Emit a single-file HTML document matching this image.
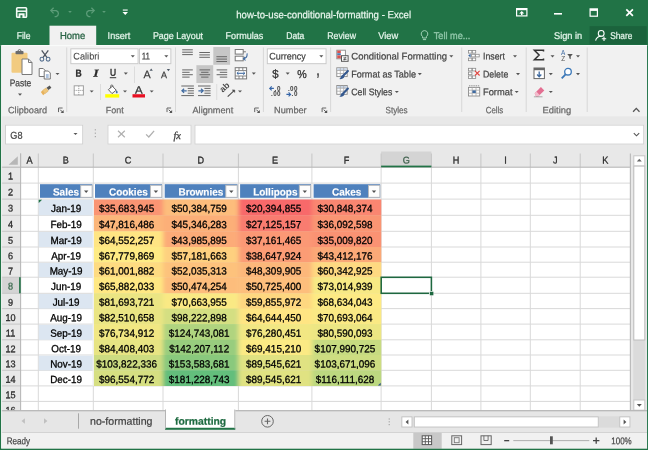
<!DOCTYPE html>
<html lang="en"><head><meta charset="utf-8"><title>how-to-use-conditional-formatting - Excel</title>
<style>
html,body{margin:0;padding:0;background:#217346;}
body{width:648px;height:450px;overflow:hidden;font-family:"Liberation Sans",sans-serif;}
#app{will-change:transform;position:relative;width:648px;height:450px;overflow:hidden;background:#f1f1f1;}
#app div,#app span.t,#app svg{position:absolute;box-sizing:border-box;}
#app span.t{white-space:nowrap;transform-origin:0 0;display:block;}
#app svg{overflow:visible;}
</style></head>
<body><div id="app">
<div style="left:0px;top:0px;width:648px;height:45px;background:#217346;transform-origin:0 0;transform:matrix(1.0000,0,0,1.0044,0.000,0.000);"></div>
<svg style="left:15px;top:6px" width="14" height="14"><g transform="translate(0.90 0.90)"><rect x="0.8" y="0.8" width="9.8" height="9.6" rx="0.8" fill="none" stroke="#f4faf6" stroke-width="1.6"/><path d="M1 4.3H10.4" stroke="#f4faf6" stroke-width="1.5"/><rect x="2.7" y="6.4" width="6" height="4" fill="#f4faf6"/><rect x="4.5" y="8.3" width="2" height="2.6" fill="#217346"/></g></svg>
<svg style="left:50px;top:7px" width="13" height="12"><g transform="translate(0.00 0.00)"><path d="M1 3.6H6.2A3.4 3.2 0 0 1 6.2 9.6H4.6" fill="none" stroke="#5c9d79" stroke-width="1.3"/><path d="M3.6 0.8L0.8 3.6L3.6 6.4" fill="none" stroke="#5c9d79" stroke-width="1.3"/></g></svg>
<svg style="left:68px;top:11px" width="6" height="4"><g transform="translate(0.20 0.00)"><path d="M0 0H3.6 L1.8 2 Z" fill="#5c9d79"/></g></svg>
<svg style="left:84px;top:7px" width="13" height="12"><g transform="translate(0.00 0.00)"><path d="M10 3.6H4.8A3.4 3.2 0 0 0 4.8 9.6H6.4" fill="none" stroke="#5c9d79" stroke-width="1.3"/><path d="M7.4 0.8L10.2 3.6L7.4 6.4" fill="none" stroke="#5c9d79" stroke-width="1.3"/></g></svg>
<svg style="left:102px;top:11px" width="6" height="4"><g transform="translate(0.20 0.00)"><path d="M0 0H3.6 L1.8 2 Z" fill="#5c9d79"/></g></svg>
<svg style="left:122px;top:9px" width="8" height="8"><g transform="translate(0.50 0.50)"><rect x="0.3" y="0" width="4.9" height="1.1" fill="#fff"/><path d="M0 2.6H5.5L2.75 5.6Z" fill="#fff"/></g></svg>
<span class="t" style="left:236px;top:8px;font-size:10.30px;line-height:14px;color:#e8f6ed;-webkit-text-stroke:0.22px #e8f6ed;transform:matrix(0.9343,0.0005,0,1.0000,0.200,0.200);">how-to-use-conditional-formatting - Excel</span>
<svg style="left:516px;top:8px" width="14" height="11"><g transform="translate(0.00 0.00)"><rect x="0.6" y="0.6" width="10.3" height="7.3" fill="none" stroke="#fff" stroke-width="1.2"/><rect x="0.6" y="0.6" width="10.3" height="1.6" fill="#fff"/><path d="M5.75 3L8.3 5.4H6.5V7H5V5.4H3.2Z" fill="#fff"/></g></svg>
<div style="left:554px;top:13px;width:8px;height:2px;background:#fff;transform-origin:0 0;transform:matrix(1.0000,0,0,0.8000,0.000,0.000);"></div>
<svg style="left:589px;top:8px" width="11" height="11"><g transform="translate(0.50 0.30)"><rect x="0.6" y="0.6" width="7.3" height="7.3" fill="none" stroke="#fff" stroke-width="1.2"/><rect x="0.6" y="0.6" width="7.3" height="2" fill="#fff"/></g></svg>
<svg style="left:625px;top:8px" width="10" height="10"><g transform="translate(0.80 0.80)"><path d="M0.5 0.5L7.1 7.1M7.1 0.5L0.5 7.1" stroke="#fff" stroke-width="1.7" fill="none"/></g></svg>
<div style="left:49px;top:25px;width:47px;height:20px;background:#f1f1f1;transform-origin:0 0;transform:matrix(0.9936,0,0,1.0000,0.500,0.700);"></div>
<span class="t" style="left:16px;top:29px;font-size:9.80px;line-height:13px;color:#e6f6ec;-webkit-text-stroke:0.22px #e6f6ec;transform:matrix(0.8739,0.0005,0,1.0000,0.700,0.100);">File</span>
<span class="t" style="left:60px;top:29px;font-size:9.80px;line-height:13px;color:#2a6546;-webkit-text-stroke:0.3px #2a6546;transform:matrix(0.9678,0.0005,0,1.0000,0.000,0.100);">Home</span>
<span class="t" style="left:107px;top:29px;font-size:9.80px;line-height:13px;color:#e6f6ec;-webkit-text-stroke:0.22px #e6f6ec;transform:matrix(0.9302,0.0005,0,1.0000,0.600,0.100);">Insert</span>
<span class="t" style="left:152px;top:29px;font-size:9.80px;line-height:13px;color:#e6f6ec;-webkit-text-stroke:0.22px #e6f6ec;transform:matrix(0.9121,0.0005,0,1.0000,0.900,0.100);">Page Layout</span>
<span class="t" style="left:225px;top:29px;font-size:9.80px;line-height:13px;color:#e6f6ec;-webkit-text-stroke:0.22px #e6f6ec;transform:matrix(0.9230,0.0005,0,1.0000,0.600,0.100);">Formulas</span>
<span class="t" style="left:286px;top:29px;font-size:9.80px;line-height:13px;color:#e6f6ec;-webkit-text-stroke:0.22px #e6f6ec;transform:matrix(0.8792,0.0005,0,1.0000,0.200,0.100);">Data</span>
<span class="t" style="left:327px;top:29px;font-size:9.80px;line-height:13px;color:#e6f6ec;-webkit-text-stroke:0.22px #e6f6ec;transform:matrix(0.8932,0.0005,0,1.0000,0.300,0.100);">Review</span>
<span class="t" style="left:378px;top:29px;font-size:9.80px;line-height:13px;color:#e6f6ec;-webkit-text-stroke:0.22px #e6f6ec;transform:matrix(0.9494,0.0005,0,1.0000,0.200,0.100);">View</span>
<svg style="left:420px;top:30px" width="10" height="13"><g transform="translate(0.50 0.00)"><path d="M4 0.6A3.3 3.3 0 0 1 5.9 6.6V8H2.1V6.6A3.3 3.3 0 0 1 4 0.6Z" fill="none" stroke="#9fd0b5" stroke-width="1"/><path d="M2.4 9.6H5.6" stroke="#9fd0b5" stroke-width="1"/></g></svg>
<span class="t" style="left:433px;top:29px;font-size:9.80px;line-height:13px;color:#8fc6a8;-webkit-text-stroke:0.35px #8fc6a8;transform:matrix(0.9334,0.0005,0,1.0000,0.800,0.100);">Tell me...</span>
<span class="t" style="left:554px;top:29px;font-size:9.80px;line-height:13px;color:#e6f6ec;-webkit-text-stroke:0.22px #e6f6ec;transform:matrix(0.9411,0.0005,0,1.0000,0.000,0.100);">Sign in</span>
<div style="left:589px;top:26px;width:57px;height:18px;background:#1b633c;transform-origin:0 0;transform:matrix(1.0000,0,0,1.0111,0.600,0.200);"></div>
<svg style="left:595px;top:30px" width="14" height="13"><g transform="translate(0.00 0.00)"><circle cx="6.2" cy="3.4" r="2.9" fill="none" stroke="#fff" stroke-width="1.1"/><path d="M0.6 10.6A5.2 5.2 0 0 1 6.6 6.3" fill="none" stroke="#fff" stroke-width="1.1"/><path d="M9 6.6V11M6.8 8.8H11.2" stroke="#fff" stroke-width="1.1"/></g></svg>
<span class="t" style="left:610px;top:29px;font-size:9.80px;line-height:13px;color:#e6f6ec;-webkit-text-stroke:0.22px #e6f6ec;transform:matrix(0.8489,0.0005,0,1.0000,0.200,0.100);">Share</span>
<div style="left:0px;top:45px;width:648px;height:71px;background:#f1f1f1;transform-origin:0 0;transform:matrix(1.0000,0,0,0.9972,0.000,0.200);"></div>
<div style="left:1px;top:45px;width:646px;height:1px;background:#f9fbfa;transform-origin:0 0;transform:matrix(1.0000,0,0,1.2000,0.000,0.000);"></div>
<div style="left:66px;top:47px;width:1px;height:64px;background:#d8d8d8;transform-origin:0 0;transform:matrix(1.0000,0,0,1.0078,0.200,0.500);"></div>
<div style="left:175px;top:47px;width:1px;height:64px;background:#d8d8d8;transform-origin:0 0;transform:matrix(1.0000,0,0,1.0078,0.000,0.500);"></div>
<div style="left:262px;top:47px;width:1px;height:64px;background:#d8d8d8;transform-origin:0 0;transform:matrix(1.0000,0,0,1.0078,0.900,0.500);"></div>
<div style="left:330px;top:47px;width:1px;height:64px;background:#d8d8d8;transform-origin:0 0;transform:matrix(1.0000,0,0,1.0078,0.100,0.500);"></div>
<div style="left:461px;top:47px;width:1px;height:64px;background:#d8d8d8;transform-origin:0 0;transform:matrix(1.0000,0,0,1.0078,0.200,0.500);"></div>
<div style="left:525px;top:47px;width:1px;height:64px;background:#d8d8d8;transform-origin:0 0;transform:matrix(1.0000,0,0,1.0078,0.700,0.500);"></div>
<div style="left:586px;top:47px;width:1px;height:64px;background:#d8d8d8;transform-origin:0 0;transform:matrix(1.0000,0,0,1.0078,0.700,0.500);"></div>
<svg style="left:10px;top:49px" width="25" height="28"><g transform="translate(0.50 0.50)"><rect x="1" y="3.2" width="16" height="20" rx="1" fill="#f2cb80" />
<rect x="5" y="1.4" width="8" height="3.4" rx="0.8" fill="#6b6b6b"/>
<circle cx="9" cy="1.6" r="1.5" fill="none" stroke="#6b6b6b" stroke-width="1"/>
<path d="M11.5 9.5H18L21.5 13V25H11.5Z" fill="#fff" stroke="#7a7a7a" stroke-width="1"/>
<path d="M18 9.5V13H21.5" fill="none" stroke="#7a7a7a" stroke-width="1"/></g></svg>
<span class="t" style="left:9px;top:76px;font-size:9.70px;line-height:13px;color:#444;-webkit-text-stroke:0.22px #444;transform:matrix(0.8668,0.0005,0,1.0000,0.700,0.300);">Paste</span>
<svg style="left:18px;top:93px" width="6" height="5"><g transform="translate(0.00 0.60)"><path d="M0 0H4 L2 2.2 Z" fill="#555"/></g></svg>
<svg style="left:39px;top:50px" width="13" height="14"><g transform="translate(0.50 0.00)"><path d="M2.2 0.4L7.6 7.6M8.8 0.4L3.4 7.6" stroke="#4e5560" stroke-width="1.3" fill="none"/>
<circle cx="2.4" cy="9.2" r="1.9" fill="none" stroke="#56708f" stroke-width="1.1"/>
<circle cx="8.6" cy="9.2" r="1.9" fill="none" stroke="#56708f" stroke-width="1.1"/></g></svg>
<svg style="left:38px;top:68px" width="15" height="14"><g transform="translate(0.70 0.00)"><path d="M0.5 0.5H4.5L6.5 2.5V8.5H0.5Z" fill="#fff" stroke="#777" stroke-width="1"/>
<path d="M5.5 3H9.6L11.6 5V11H5.5Z" fill="#fff" stroke="#777" stroke-width="1"/>
<path d="M7.2 7H10M7.2 9H10" stroke="#4a79b5" stroke-width="0.9"/></g></svg>
<svg style="left:55px;top:72px" width="6" height="5"><g transform="translate(0.50 0.90)"><path d="M0 0H4 L2 2.2 Z" fill="#555"/></g></svg>
<svg style="left:40px;top:85px" width="14" height="13"><g transform="translate(0.00 0.00)"><path d="M6.5 2.8L9.6 0.6L11.4 2.8L8.4 5Z" fill="#555"/>
<path d="M2.6 5.4L6 3L8.4 6L5 8.6Z" fill="#f0c679" stroke="#d9a650" stroke-width="0.5"/>
<path d="M0.8 7L2.6 5.6L5 8.6L3.2 10.2Z" fill="#e8b25b"/></g></svg>
<span class="t" style="left:8px;top:104px;font-size:9.20px;line-height:12px;color:#666;-webkit-text-stroke:0.22px #666;transform:matrix(0.9954,0.0005,0,1.0000,0.000,0.200);">Clipboard</span>
<svg style="left:58px;top:107px" width="8" height="8"><g transform="translate(0.00 0.50)"><path d="M0.5 4.6V0.5H4.6" fill="none" stroke="#666" stroke-width="1"/><path d="M2.2 2.2L5 5" fill="none" stroke="#555" stroke-width="1"/><path d="M5.6 2.6V5.6H2.6Z" fill="#555"/></g></svg>
<div style="left:70px;top:48px;width:68px;height:16px;background:#fff;border:1px solid #c8c8c8;transform-origin:0 0;transform:matrix(1.0044,0,0,0.9938,0.300,0.300);"></div>
<span class="t" style="left:73px;top:49px;font-size:9.70px;line-height:13px;color:#444;-webkit-text-stroke:0.08px #444;transform:matrix(0.9494,0.0005,0,1.0000,0.300,0.400);">Calibri</span>
<svg style="left:130px;top:55px" width="6" height="5"><g transform="translate(0.80 0.30)"><path d="M0 0H4 L2 2.2 Z" fill="#555"/></g></svg>
<div style="left:138px;top:48px;width:32px;height:16px;background:#fff;border:1px solid #c8c8c8;transform-origin:0 0;transform:matrix(1.0156,0,0,0.9938,0.900,0.300);"></div>
<span class="t" style="left:141px;top:49px;font-size:9.70px;line-height:13px;color:#444;-webkit-text-stroke:0.22px #444;transform:matrix(0.8242,0.0005,0,1.0000,0.700,0.400);">11</span>
<svg style="left:164px;top:55px" width="6" height="5"><g transform="translate(0.30 0.30)"><path d="M0 0H4 L2 2.2 Z" fill="#555"/></g></svg>
<span class="t" style="left:75px;top:66px;font-size:10.00px;line-height:13px;color:#2a2a2a;font-weight:700;-webkit-text-stroke:0.3px #2a2a2a;transform:matrix(0.8585,0.0005,0,1.0000,0.400,0.400);">B</span>
<span class="t" style="left:93px;top:66px;font-size:10.40px;line-height:14px;color:#2a2a2a;font-weight:700;font-style:italic;font-family:'Liberation Serif',serif;-webkit-text-stroke:0.3px #2a2a2a;transform:matrix(1.2355,0.0005,0,1.0000,0.600,0.400);">I</span>
<span class="t" style="left:109px;top:65px;font-size:9.80px;line-height:13px;color:#2a2a2a;-webkit-text-stroke:0.4px #2a2a2a;transform:matrix(0.8619,0.0005,0,1.0000,0.900,0.800);">U</span>
<div style="left:109px;top:77px;width:6px;height:1px;background:#333;transform-origin:0 0;transform:matrix(1.0667,0,0,1.0000,0.800,0.200);"></div>
<svg style="left:123px;top:72px" width="6" height="5"><g transform="translate(0.80 0.50)"><path d="M0 0H4 L2 2.2 Z" fill="#555"/></g></svg>
<div style="left:134px;top:66px;width:1px;height:16px;background:#dcdcdc;transform-origin:0 0;transform:matrix(1.0000,0,0,1.0312,0.000,0.500);"></div>
<span class="t" style="left:143px;top:67px;font-size:11.00px;line-height:15px;color:#3a3a3a;-webkit-text-stroke:0.22px #3a3a3a;transform:matrix(0.9813,0.0005,0,1.0000,0.400,0.200);">A</span>
<svg style="left:149px;top:68px" width="6" height="5"><g transform="translate(0.60 0.60)"><path d="M0 2.2L1.6 0L3.2 2.2Z" fill="#4d5866"/></g></svg>
<span class="t" style="left:161px;top:68px;font-size:9.60px;line-height:13px;color:#3a3a3a;-webkit-text-stroke:0.22px #3a3a3a;transform:matrix(0.9370,0.0005,0,1.0000,0.000,0.200);">A</span>
<svg style="left:166px;top:69px" width="6" height="5"><g transform="translate(0.80 0.00)"><path d="M0 0H3.2L1.6 2.2Z" fill="#4d5866"/></g></svg>
<svg style="left:73px;top:85px" width="13" height="13"><g transform="translate(0.70 0.30)"><rect x="0.5" y="0.5" width="9.2" height="9.2" fill="#fff" stroke="#a0a0a0" stroke-width="1"/><path d="M5.1 0.5V9.7M0.5 5.1H9.7" stroke="#a0a0a0" stroke-width="1" stroke-dasharray="1.2 0.8"/></g></svg>
<svg style="left:89px;top:90px" width="6" height="5"><g transform="translate(0.70 0.40)"><path d="M0 0H4 L2 2.2 Z" fill="#555"/></g></svg>
<div style="left:100px;top:84px;width:1px;height:16px;background:#dcdcdc;transform-origin:0 0;transform:matrix(1.0000,0,0,1.0000,0.000,0.000);"></div>
<svg style="left:105px;top:85px" width="17" height="15"><g transform="translate(0.00 0.00)"><rect x="0.2" y="9.2" width="14" height="3.4" fill="#ffff00"/>
<path d="M3.4 4.6L7.4 1.2L11.2 5.2L7 8.6Z" fill="#fff" stroke="#555" stroke-width="0.9"/>
<path d="M5.6 3.2V1.2A1.2 1.2 0 0 1 8 1.2V2" fill="none" stroke="#555" stroke-width="0.8"/>
<path d="M11.6 5.2C13 6.6 13 8.2 11.8 8.4C10.6 8.2 10.6 6.6 11.6 5.2Z" fill="#3f6aa0"/></g></svg>
<svg style="left:123px;top:90px" width="6" height="5"><g transform="translate(0.00 0.40)"><path d="M0 0H4 L2 2.2 Z" fill="#555"/></g></svg>
<span class="t" style="left:135px;top:83px;font-size:10.40px;line-height:14px;color:#3a3a3a;-webkit-text-stroke:0.3px #3a3a3a;transform:matrix(1.0956,0.0005,0,1.0000,0.000,0.500);">A</span>
<div style="left:132px;top:94px;width:12px;height:3px;background:#e81123;transform-origin:0 0;transform:matrix(1.0417,0,0,1.1000,0.500,0.200);"></div>
<svg style="left:149px;top:90px" width="6" height="5"><g transform="translate(0.70 0.40)"><path d="M0 0H4 L2 2.2 Z" fill="#555"/></g></svg>
<span class="t" style="left:105px;top:104px;font-size:9.20px;line-height:12px;color:#666;-webkit-text-stroke:0.22px #666;transform:matrix(0.9723,0.0005,0,1.0000,0.800,0.200);">Font</span>
<svg style="left:166px;top:107px" width="8" height="8"><g transform="translate(0.50 0.50)"><path d="M0.5 4.6V0.5H4.6" fill="none" stroke="#666" stroke-width="1"/><path d="M2.2 2.2L5 5" fill="none" stroke="#555" stroke-width="1"/><path d="M5.6 2.6V5.6H2.6Z" fill="#555"/></g></svg>
<div style="left:213px;top:47px;width:17px;height:18px;background:#c6c6c6;transform-origin:0 0;transform:matrix(0.9882,0,0,0.9889,0.300,0.000);"></div>
<div style="left:196px;top:65px;width:17px;height:18px;background:#c6c6c6;transform-origin:0 0;transform:matrix(0.9882,0,0,0.9889,0.400,0.200);"></div>
<svg style="left:182px;top:49px" width="13" height="10"><g transform="translate(0.20 0.30)"><rect x="0.00" y="0.00" width="10.60" height="1" fill="#666"/><rect x="0.00" y="2.40" width="10.60" height="1" fill="#666"/><rect x="0.00" y="4.80" width="10.60" height="1" fill="#666"/></g></svg>
<svg style="left:199px;top:52px" width="13" height="10"><g transform="translate(0.30 0.00)"><rect x="0.00" y="0.00" width="10.60" height="1" fill="#666"/><rect x="0.00" y="2.40" width="10.60" height="1" fill="#666"/><rect x="0.00" y="4.80" width="10.60" height="1" fill="#666"/></g></svg>
<svg style="left:216px;top:56px" width="13" height="10"><g transform="translate(0.40 0.20)"><rect x="0.00" y="0.00" width="10.60" height="1" fill="#666"/><rect x="0.00" y="2.40" width="10.60" height="1" fill="#666"/><rect x="0.00" y="4.80" width="10.60" height="1" fill="#666"/></g></svg>
<svg style="left:234px;top:49px" width="15" height="15"><g transform="translate(0.70 0.00)"><rect x="0.5" y="0.5" width="8" height="4.6" fill="#fff" stroke="#777" stroke-width="1"/>
<rect x="0.5" y="7.2" width="8" height="4.6" fill="#fff" stroke="#777" stroke-width="1"/>
<path d="M8.5 2.8H11.2" stroke="#777" stroke-width="1"/>
<path d="M12.4 4.4C12.6 7.4 11.4 9.4 9 9.8" fill="none" stroke="#3f6aa0" stroke-width="1.1"/>
<path d="M10.6 8L8.8 9.9L10.9 11.4" fill="none" stroke="#3f6aa0" stroke-width="1.1"/></g></svg>
<svg style="left:182px;top:69px" width="13" height="12"><g transform="translate(0.20 0.40)"><rect x="0.00" y="0.00" width="10.60" height="1" fill="#666"/><rect x="0.00" y="2.40" width="7.40" height="1" fill="#666"/><rect x="0.00" y="4.80" width="10.60" height="1" fill="#666"/><rect x="0.00" y="7.20" width="7.40" height="1" fill="#666"/></g></svg>
<svg style="left:199px;top:69px" width="13" height="12"><g transform="translate(0.50 0.40)"><rect x="0.00" y="0.00" width="10.60" height="1" fill="#666"/><rect x="1.60" y="2.40" width="7.40" height="1" fill="#666"/><rect x="0.00" y="4.80" width="10.60" height="1" fill="#666"/><rect x="1.60" y="7.20" width="7.40" height="1" fill="#666"/></g></svg>
<svg style="left:216px;top:69px" width="13" height="12"><g transform="translate(0.60 0.40)"><rect x="0.00" y="0.00" width="10.60" height="1" fill="#666"/><rect x="3.20" y="2.40" width="7.40" height="1" fill="#666"/><rect x="0.00" y="4.80" width="10.60" height="1" fill="#666"/><rect x="3.20" y="7.20" width="7.40" height="1" fill="#666"/></g></svg>
<svg style="left:234px;top:67px" width="15" height="15"><g transform="translate(0.70 0.20)"><rect x="0.5" y="0.5" width="11.4" height="11.2" fill="#fff" stroke="#777" stroke-width="1"/>
<path d="M0.5 3.4H11.9M0.5 8.8H11.9M4.3 0.5V3.4M8.1 0.5V3.4M4.3 8.8V11.7M8.1 8.8V11.7" stroke="#777" stroke-width="0.9"/>
<path d="M2.4 6.1H10" stroke="#3f6aa0" stroke-width="1.1"/>
<path d="M3.8 4.7L2.2 6.1L3.8 7.5M8.6 4.7L10.2 6.1L8.6 7.5" fill="none" stroke="#3f6aa0" stroke-width="1"/></g></svg>
<svg style="left:251px;top:72px" width="6" height="5"><g transform="translate(0.80 0.50)"><path d="M0 0H4 L2 2.2 Z" fill="#555"/></g></svg>
<svg style="left:181px;top:85px" width="15" height="13"><g transform="translate(0.30 0.50)"><rect x="0" y="0" width="12.6" height="1" fill="#666"/><rect x="6.4" y="2.4" width="6.2" height="1" fill="#666"/><rect x="6.4" y="4.8" width="6.2" height="1" fill="#666"/><rect x="6.4" y="7.2" width="6.2" height="1" fill="#666"/><rect x="0" y="9.6" width="12.6" height="1" fill="#666"/>
<path d="M0.6 5.3H5.4M2.8 3.2L0.6 5.3L2.8 7.4" fill="none" stroke="#3f6aa0" stroke-width="1.2"/></g></svg>
<svg style="left:198px;top:85px" width="15" height="13"><g transform="translate(0.00 0.50)"><rect x="0" y="0" width="12.6" height="1" fill="#666"/><rect x="6.4" y="2.4" width="6.2" height="1" fill="#666"/><rect x="6.4" y="4.8" width="6.2" height="1" fill="#666"/><rect x="6.4" y="7.2" width="6.2" height="1" fill="#666"/><rect x="0" y="9.6" width="12.6" height="1" fill="#666"/>
<path d="M0.4 5.3H5.2M3 3.2L5.2 5.3L3 7.4" fill="none" stroke="#3f6aa0" stroke-width="1.2"/></g></svg>
<div style="left:216px;top:84px;width:1px;height:16px;background:#dcdcdc;transform-origin:0 0;transform:matrix(1.0000,0,0,1.0000,0.200,0.000);"></div>
<svg style="left:222px;top:84px" width="15" height="15"><g transform="translate(0.50 0.60)"><text x="0" y="0" font-size="8.6" font-weight="700" font-family="Liberation Sans, sans-serif" fill="#4a4a4a" transform="translate(0.2,8.2) rotate(-42)">ab</text><path d="M5.2 12L11.6 6" stroke="#4a4a4a" stroke-width="1.1"/><path d="M9.6 5.4L12.2 5.4L12.2 8" fill="#4a4a4a" stroke="#4a4a4a" stroke-width="0.6"/></g></svg>
<svg style="left:238px;top:90px" width="6" height="5"><g transform="translate(0.00 0.40)"><path d="M0 0H4 L2 2.2 Z" fill="#555"/></g></svg>
<span class="t" style="left:192px;top:104px;font-size:9.20px;line-height:12px;color:#666;-webkit-text-stroke:0.22px #666;transform:matrix(0.9973,0.0005,0,1.0000,0.500,0.200);">Alignment</span>
<svg style="left:254px;top:107px" width="8" height="8"><g transform="translate(0.20 0.50)"><path d="M0.5 4.6V0.5H4.6" fill="none" stroke="#666" stroke-width="1"/><path d="M2.2 2.2L5 5" fill="none" stroke="#555" stroke-width="1"/><path d="M5.6 2.6V5.6H2.6Z" fill="#555"/></g></svg>
<div style="left:266px;top:48px;width:60px;height:16px;background:#fff;border:1px solid #c8c8c8;transform-origin:0 0;transform:matrix(0.9967,0,0,0.9938,0.800,0.300);"></div>
<span class="t" style="left:269px;top:49px;font-size:9.70px;line-height:13px;color:#444;-webkit-text-stroke:0.22px #444;transform:matrix(0.9250,0.0005,0,1.0000,0.300,0.400);">Currency</span>
<svg style="left:319px;top:55px" width="6" height="5"><g transform="translate(0.30 0.30)"><path d="M0 0H4 L2 2.2 Z" fill="#555"/></g></svg>
<span class="t" style="left:272px;top:66px;font-size:12.00px;line-height:16px;color:#333;-webkit-text-stroke:0.3px #333;transform:matrix(0.9440,0.0005,0,1.0000,0.200,0.000);">$</span>
<svg style="left:285px;top:72px" width="6" height="5"><g transform="translate(0.70 0.50)"><path d="M0 0H4 L2 2.2 Z" fill="#555"/></g></svg>
<span class="t" style="left:297px;top:67px;font-size:11.50px;line-height:15px;color:#333;-webkit-text-stroke:0.3px #333;transform:matrix(0.9291,0.0005,0,1.0000,0.300,0.000);">%</span>
<span class="t" style="left:316px;top:61px;font-size:14.00px;line-height:19px;color:#444;font-weight:700;-webkit-text-stroke:0.22px #444;transform:matrix(0.7713,0.0005,0,1.0000,0.600,0.500);">,</span>
<svg style="left:269px;top:85px" width="14" height="13"><g transform="translate(0.30 0.80)"><text x="5.2" y="4.8" font-size="6.3" font-weight="700" font-family="Liberation Sans, sans-serif" fill="#3c3c3c" textLength="6">.0</text><text x="1.8" y="10.6" font-size="6.3" font-weight="700" font-family="Liberation Sans, sans-serif" fill="#3c3c3c" textLength="9.4">.00</text><path d="M0.6 2.6H4.6M2.4 0.6L0.4 2.6L2.4 4.6" fill="none" stroke="#3565a8" stroke-width="1.1"/></g></svg>
<svg style="left:286px;top:85px" width="14" height="13"><g transform="translate(0.00 0.80)"><text x="2" y="4.8" font-size="6.3" font-weight="700" font-family="Liberation Sans, sans-serif" fill="#3c3c3c" textLength="9.4">.00</text><text x="5.6" y="10.6" font-size="6.3" font-weight="700" font-family="Liberation Sans, sans-serif" fill="#3c3c3c" textLength="6">.0</text><path d="M0.4 8.6H4.6M2.6 6.6L4.6 8.6L2.6 10.6" fill="none" stroke="#3565a8" stroke-width="1.1"/></g></svg>
<span class="t" style="left:274px;top:104px;font-size:9.20px;line-height:12px;color:#666;-webkit-text-stroke:0.22px #666;transform:matrix(0.9993,0.0005,0,1.0000,0.000,0.200);">Number</span>
<svg style="left:321px;top:107px" width="8" height="8"><g transform="translate(0.60 0.50)"><path d="M0.5 4.6V0.5H4.6" fill="none" stroke="#666" stroke-width="1"/><path d="M2.2 2.2L5 5" fill="none" stroke="#555" stroke-width="1"/><path d="M5.6 2.6V5.6H2.6Z" fill="#555"/></g></svg>
<svg style="left:336px;top:49px" width="15" height="15"><g transform="translate(0.30 0.70)"><rect x="0.5" y="0.5" width="8.6" height="8.6" fill="#fff" stroke="#8a8a8a" stroke-width="0.9"/>
<rect x="0.9" y="0.9" width="3.6" height="2.4" fill="#d9534f"/><rect x="0.9" y="5.6" width="3.6" height="3" fill="#d9534f"/><rect x="0.9" y="3.5" width="3.6" height="1.9" fill="#4a79b5"/>
<rect x="5.2" y="6" width="6.6" height="5.6" fill="#fff" stroke="#555" stroke-width="1"/>
<path d="M7 8.2H10.2M7 9.8H10.2M9.2 7.2L7.8 10.8" stroke="#555" stroke-width="0.8"/></g></svg>
<svg style="left:336px;top:67px" width="15" height="15"><g transform="translate(0.30 0.30)"><rect x="0.5" y="0.5" width="10.4" height="8.8" fill="#fff" stroke="#8a8a8a" stroke-width="0.9"/>
<rect x="1" y="1" width="9.4" height="2.2" fill="#c9d6e8"/>
<path d="M0.5 3.2H10.9M0.5 6.2H10.9M4 0.5V9.3M7.4 0.5V9.3" stroke="#a9a9a9" stroke-width="0.8"/>
<path d="M11.6 3.6L6.6 8.8" stroke="#35598f" stroke-width="2.1" stroke-linecap="round"/>
<path d="M6.9 7.6L8.2 9.2C7.6 11.2 5.2 12 3 11.8C4.4 10.8 4.6 9.4 5.2 8.2Z" fill="#35598f"/></g></svg>
<svg style="left:336px;top:85px" width="15" height="15"><g transform="translate(0.30 0.00)"><rect x="0.5" y="0.5" width="10.4" height="8.8" fill="#fff" stroke="#8a8a8a" stroke-width="0.9"/>
<rect x="1" y="1" width="9.4" height="2.2" fill="#c9d6e8"/>
<path d="M0.5 3.2H10.9M0.5 6.2H10.9M4 0.5V9.3M7.4 0.5V9.3" stroke="#a9a9a9" stroke-width="0.8"/>
<path d="M11.6 3.6L6.6 8.8" stroke="#35598f" stroke-width="2.1" stroke-linecap="round"/>
<path d="M6.9 7.6L8.2 9.2C7.6 11.2 5.2 12 3 11.8C4.4 10.8 4.6 9.4 5.2 8.2Z" fill="#35598f"/></g></svg>
<span class="t" style="left:351px;top:49px;font-size:9.70px;line-height:13px;color:#444;-webkit-text-stroke:0.22px #444;transform:matrix(0.9827,0.0005,0,1.0000,0.300,0.400);">Conditional Formatting</span>
<svg style="left:449px;top:55px" width="6" height="5"><g transform="translate(0.30 0.30)"><path d="M0 0H4 L2 2.2 Z" fill="#555"/></g></svg>
<span class="t" style="left:351px;top:67px;font-size:9.70px;line-height:13px;color:#444;-webkit-text-stroke:0.22px #444;transform:matrix(0.9327,0.0005,0,1.0000,0.300,0.500);">Format as Table</span>
<svg style="left:417px;top:73px" width="6" height="5"><g transform="translate(0.80 0.10)"><path d="M0 0H4 L2 2.2 Z" fill="#555"/></g></svg>
<span class="t" style="left:351px;top:85px;font-size:9.70px;line-height:13px;color:#444;-webkit-text-stroke:0.22px #444;transform:matrix(0.8948,0.0005,0,1.0000,0.300,0.300);">Cell Styles</span>
<svg style="left:394px;top:90px" width="6" height="5"><g transform="translate(0.80 0.90)"><path d="M0 0H4 L2 2.2 Z" fill="#555"/></g></svg>
<span class="t" style="left:385px;top:104px;font-size:9.20px;line-height:12px;color:#666;-webkit-text-stroke:0.22px #666;transform:matrix(0.8861,0.0005,0,1.0000,0.500,0.200);">Styles</span>
<svg style="left:468px;top:49px" width="15" height="15"><g transform="translate(0.00 0.50)"><rect x="0.5" y="1" width="3.4" height="2.6" fill="#fff" stroke="#8a8a8a" stroke-width="0.8"/><rect x="4.3" y="1" width="3.4" height="2.6" fill="#fff" stroke="#8a8a8a" stroke-width="0.8"/>
<rect x="3.6" y="4.8" width="3.6" height="2.6" fill="#fff" stroke="#8a8a8a" stroke-width="0.8"/><rect x="7.6" y="4.8" width="3.6" height="2.6" fill="#fff" stroke="#8a8a8a" stroke-width="0.8"/>
<rect x="0.5" y="8.6" width="3.4" height="2.6" fill="#fff" stroke="#8a8a8a" stroke-width="0.8"/><rect x="4.3" y="8.6" width="3.4" height="2.6" fill="#fff" stroke="#8a8a8a" stroke-width="0.8"/>
<path d="M0.2 6.1L2.6 4.2V8Z" fill="#3f6aa0"/></g></svg>
<svg style="left:468px;top:67px" width="15" height="15"><g transform="translate(0.00 0.30)"><rect x="0.5" y="1" width="3.4" height="2.6" fill="#fff" stroke="#8a8a8a" stroke-width="0.8"/><rect x="4.3" y="1" width="3.4" height="2.6" fill="#fff" stroke="#8a8a8a" stroke-width="0.8"/>
<rect x="0.5" y="4.8" width="3.4" height="2.6" fill="#fff" stroke="#8a8a8a" stroke-width="0.8"/>
<rect x="0.5" y="8.6" width="3.4" height="2.6" fill="#fff" stroke="#8a8a8a" stroke-width="0.8"/><rect x="4.3" y="8.6" width="3.4" height="2.6" fill="#fff" stroke="#8a8a8a" stroke-width="0.8"/>
<path d="M7 3.6L11.6 8.2M11.6 3.6L7 8.2" stroke="#e0443e" stroke-width="1.1"/></g></svg>
<svg style="left:468px;top:85px" width="15" height="15"><g transform="translate(0.00 0.00)"><rect x="0.5" y="2.4" width="11.2" height="8.6" fill="#fff" stroke="#8a8a8a" stroke-width="0.9"/>
<path d="M0.5 5.2H11.7M0.5 8.2H11.7M4.2 2.4V11M8 2.4V11" stroke="#a9a9a9" stroke-width="0.8"/>
<rect x="4.4" y="5.4" width="3.4" height="2.6" fill="#3f6aa0"/>
<path d="M1 0.8H11.4" stroke="#777" stroke-width="0.8" stroke-dasharray="1.4 0.8"/></g></svg>
<span class="t" style="left:483px;top:49px;font-size:9.70px;line-height:13px;color:#444;-webkit-text-stroke:0.22px #444;transform:matrix(0.9068,0.0005,0,1.0000,0.000,0.400);">Insert</span>
<svg style="left:513px;top:55px" width="6" height="5"><g transform="translate(0.00 0.30)"><path d="M0 0H4 L2 2.2 Z" fill="#555"/></g></svg>
<span class="t" style="left:483px;top:67px;font-size:9.70px;line-height:13px;color:#444;-webkit-text-stroke:0.22px #444;transform:matrix(0.9023,0.0005,0,1.0000,0.000,0.500);">Delete</span>
<svg style="left:516px;top:73px" width="6" height="5"><g transform="translate(0.00 0.10)"><path d="M0 0H4 L2 2.2 Z" fill="#555"/></g></svg>
<span class="t" style="left:483px;top:85px;font-size:9.70px;line-height:13px;color:#444;-webkit-text-stroke:0.22px #444;transform:matrix(0.9603,0.0005,0,1.0000,0.000,0.300);">Format</span>
<svg style="left:514px;top:90px" width="6" height="5"><g transform="translate(0.70 0.90)"><path d="M0 0H4 L2 2.2 Z" fill="#555"/></g></svg>
<span class="t" style="left:485px;top:104px;font-size:9.20px;line-height:12px;color:#666;-webkit-text-stroke:0.22px #666;transform:matrix(0.8558,0.0005,0,1.0000,0.800,0.200);">Cells</span>
<svg style="left:533px;top:49px" width="13" height="13"><g transform="translate(0.50 0.60)"><path d="M10 1.8V0.7H0.9L5.6 5.4L0.9 10.1H10V9" fill="none" stroke="#333" stroke-width="1.5"/></g></svg>
<svg style="left:550px;top:55px" width="6" height="5"><g transform="translate(0.50 0.30)"><path d="M0 0H4 L2 2.2 Z" fill="#555"/></g></svg>
<svg style="left:561px;top:49px" width="14" height="15"><g transform="translate(0.00 0.00)"><text x="0" y="5.6" font-size="6.4" font-family="Liberation Sans, sans-serif" fill="#3f6aa0">A</text><text x="0.2" y="12" font-size="6.4" font-family="Liberation Sans, sans-serif" fill="#555">Z</text><path d="M6.2 5H11.8L9.7 7.4V10.2L8.3 9.2V7.4Z" fill="#555"/></g></svg>
<svg style="left:576px;top:55px" width="6" height="5"><g transform="translate(0.00 0.30)"><path d="M0 0H4 L2 2.2 Z" fill="#555"/></g></svg>
<svg style="left:533px;top:67px" width="14" height="14"><g transform="translate(0.50 0.50)"><rect x="0.5" y="0.5" width="10.4" height="10.6" fill="#fff" stroke="#666" stroke-width="1"/><rect x="0.5" y="0.5" width="10.4" height="2.2" fill="#666"/><path d="M5.7 4V9M3.6 7L5.7 9.2L7.8 7" fill="none" stroke="#3f6aa0" stroke-width="1.3"/></g></svg>
<svg style="left:548px;top:73px" width="6" height="5"><g transform="translate(0.80 0.10)"><path d="M0 0H4 L2 2.2 Z" fill="#555"/></g></svg>
<svg style="left:560px;top:67px" width="14" height="14"><g transform="translate(0.80 0.50)"><circle cx="7.2" cy="4.2" r="3.3" fill="#fff" stroke="#3b78b8" stroke-width="1.3"/><path d="M4.8 6.8L0.9 10.8" stroke="#3b78b8" stroke-width="1.8"/></g></svg>
<svg style="left:576px;top:73px" width="6" height="5"><g transform="translate(0.00 0.10)"><path d="M0 0H4 L2 2.2 Z" fill="#555"/></g></svg>
<svg style="left:533px;top:86px" width="14" height="13"><g transform="translate(0.50 0.00)"><path d="M1.2 7.2L7.4 1L10.8 4.4L4.6 10.6H2.6Z" fill="#e36f92"/><path d="M1.2 7.2L2.8 5.6L6.2 9L4.6 10.6H2.6Z" fill="#f4bccd"/><path d="M0.4 10.8H9" stroke="#888" stroke-width="0.7"/></g></svg>
<svg style="left:548px;top:90px" width="6" height="5"><g transform="translate(0.80 0.90)"><path d="M0 0H4 L2 2.2 Z" fill="#555"/></g></svg>
<span class="t" style="left:542px;top:104px;font-size:9.20px;line-height:12px;color:#666;-webkit-text-stroke:0.22px #666;transform:matrix(1.0202,0.0005,0,1.0000,0.500,0.200);">Editing</span>
<svg style="left:632px;top:107px" width="10" height="7"><g transform="translate(0.50 0.50)"><path d="M0.6 4.2L3.8 0.9L7 4.2" fill="none" stroke="#555" stroke-width="1.3"/></g></svg>
<div style="left:0px;top:116px;width:648px;height:36px;background:#e8e8e8;transform-origin:0 0;transform:matrix(1.0000,0,0,1.0000,0.000,0.300);"></div>
<div style="left:5px;top:124px;width:78px;height:20px;background:#fff;border:1px solid #d0d0d0;transform-origin:0 0;transform:matrix(1.0026,0,0,1.0000,0.000,0.600);"></div>
<span class="t" style="left:10px;top:128px;font-size:10.00px;line-height:13px;color:#444;-webkit-text-stroke:0.22px #444;transform:matrix(0.9146,0.0005,0,1.0000,0.300,0.700);">G8</span>
<svg style="left:73px;top:132px" width="6" height="5"><g transform="translate(0.50 0.90)"><path d="M0 0H4 L2 2.2 Z" fill="#555"/></g></svg>
<div style="left:94px;top:129px;width:1px;height:1px;background:#9a9a9a;transform-origin:0 0;transform:matrix(1.0000,0,0,1.2000,0.800,0.200);"></div>
<div style="left:94px;top:132px;width:1px;height:1px;background:#9a9a9a;transform-origin:0 0;transform:matrix(1.0000,0,0,1.2000,0.800,0.600);"></div>
<div style="left:94px;top:136px;width:1px;height:1px;background:#9a9a9a;transform-origin:0 0;transform:matrix(1.0000,0,0,1.2000,0.800,0.000);"></div>
<div style="left:107px;top:124px;width:84px;height:20px;background:#fff;border:1px solid #d0d0d0;transform-origin:0 0;transform:matrix(1.0024,0,0,1.0000,0.400,0.600);"></div>
<svg style="left:117px;top:130px" width="10" height="10"><g transform="translate(0.60 0.40)"><path d="M0.4 0.4L7.2 6.8M7.2 0.4L0.4 6.8" stroke="#b0b0b0" stroke-width="1.2" fill="none"/></g></svg>
<svg style="left:145px;top:130px" width="11" height="10"><g transform="translate(0.60 0.20)"><path d="M0.5 4.2L3.2 6.8L8.5 0.6" stroke="#b0b0b0" stroke-width="1.3" fill="none"/></g></svg>
<span class="t" style="left:173px;top:128px;font-size:10.60px;line-height:14px;color:#444;font-style:italic;font-family:'Liberation Serif',serif;-webkit-text-stroke:0.3px #444;transform:matrix(0.9935,0.0005,0,1.0000,0.400,0.900);">fx</span>
<div style="left:194px;top:124px;width:450px;height:20px;background:#fff;border:1px solid #d0d0d0;transform-origin:0 0;transform:matrix(0.9996,0,0,1.0000,0.400,0.600);"></div>
<svg style="left:633px;top:132px" width="9" height="6"><g transform="translate(0.30 0.60)"><path d="M0.5 0.5L3.2 3.2L5.9 0.5" fill="none" stroke="#555" stroke-width="1.1"/></g></svg>
<svg style="left:0;top:0" width="648" height="450" viewBox="0 0 648 450"><rect x="0.00" y="151.50" width="648.00" height="259.10" fill="#e8e8e8"/><rect x="20.60" y="167.20" width="609.80" height="243.40" fill="#fff"/><rect x="381.10" y="151.50" width="50.30" height="15.70" fill="#d4d4d4"/><rect x="0.00" y="277.20" width="20.60" height="16.10" fill="#d4d4d4"/><rect x="37.80" y="167.20" width="1.00" height="243.40" fill="#d9d9d9"/><rect x="92.80" y="167.20" width="1.00" height="243.40" fill="#d9d9d9"/><rect x="162.50" y="167.20" width="1.00" height="243.40" fill="#d9d9d9"/><rect x="237.90" y="167.20" width="1.00" height="243.40" fill="#d9d9d9"/><rect x="311.40" y="167.20" width="1.00" height="243.40" fill="#d9d9d9"/><rect x="380.60" y="167.20" width="1.00" height="243.40" fill="#d9d9d9"/><rect x="430.90" y="167.20" width="1.00" height="243.40" fill="#d9d9d9"/><rect x="480.40" y="167.20" width="1.00" height="243.40" fill="#d9d9d9"/><rect x="529.80" y="167.20" width="1.00" height="243.40" fill="#d9d9d9"/><rect x="579.70" y="167.20" width="1.00" height="243.40" fill="#d9d9d9"/><rect x="20.60" y="182.60" width="609.80" height="1.00" fill="#d9d9d9"/><rect x="20.60" y="198.60" width="609.80" height="1.00" fill="#d9d9d9"/><rect x="20.60" y="214.80" width="609.80" height="1.00" fill="#d9d9d9"/><rect x="20.60" y="230.80" width="609.80" height="1.00" fill="#d9d9d9"/><rect x="20.60" y="246.50" width="609.80" height="1.00" fill="#d9d9d9"/><rect x="20.60" y="261.70" width="609.80" height="1.00" fill="#d9d9d9"/><rect x="20.60" y="276.70" width="609.80" height="1.00" fill="#d9d9d9"/><rect x="20.60" y="292.80" width="609.80" height="1.00" fill="#d9d9d9"/><rect x="20.60" y="308.10" width="609.80" height="1.00" fill="#d9d9d9"/><rect x="20.60" y="323.60" width="609.80" height="1.00" fill="#d9d9d9"/><rect x="20.60" y="339.30" width="609.80" height="1.00" fill="#d9d9d9"/><rect x="20.60" y="354.50" width="609.80" height="1.00" fill="#d9d9d9"/><rect x="20.60" y="369.80" width="609.80" height="1.00" fill="#d9d9d9"/><rect x="20.60" y="385.40" width="609.80" height="1.00" fill="#d9d9d9"/><rect x="20.60" y="400.90" width="609.80" height="1.00" fill="#d9d9d9"/><rect x="20.10" y="153.50" width="1.00" height="13.70" fill="#c6c6c6"/><rect x="37.80" y="153.50" width="1.00" height="13.70" fill="#c6c6c6"/><rect x="92.80" y="153.50" width="1.00" height="13.70" fill="#c6c6c6"/><rect x="162.50" y="153.50" width="1.00" height="13.70" fill="#c6c6c6"/><rect x="237.90" y="153.50" width="1.00" height="13.70" fill="#c6c6c6"/><rect x="311.40" y="153.50" width="1.00" height="13.70" fill="#c6c6c6"/><rect x="380.60" y="153.50" width="1.00" height="13.70" fill="#c6c6c6"/><rect x="430.90" y="153.50" width="1.00" height="13.70" fill="#c6c6c6"/><rect x="480.40" y="153.50" width="1.00" height="13.70" fill="#c6c6c6"/><rect x="529.80" y="153.50" width="1.00" height="13.70" fill="#c6c6c6"/><rect x="579.70" y="153.50" width="1.00" height="13.70" fill="#c6c6c6"/><rect x="1.30" y="182.60" width="19.30" height="1.00" fill="#c6c6c6"/><rect x="1.30" y="198.60" width="19.30" height="1.00" fill="#c6c6c6"/><rect x="1.30" y="214.80" width="19.30" height="1.00" fill="#c6c6c6"/><rect x="1.30" y="230.80" width="19.30" height="1.00" fill="#c6c6c6"/><rect x="1.30" y="246.50" width="19.30" height="1.00" fill="#c6c6c6"/><rect x="1.30" y="261.70" width="19.30" height="1.00" fill="#c6c6c6"/><rect x="1.30" y="276.70" width="19.30" height="1.00" fill="#c6c6c6"/><rect x="1.30" y="292.80" width="19.30" height="1.00" fill="#c6c6c6"/><rect x="1.30" y="308.10" width="19.30" height="1.00" fill="#c6c6c6"/><rect x="1.30" y="323.60" width="19.30" height="1.00" fill="#c6c6c6"/><rect x="1.30" y="339.30" width="19.30" height="1.00" fill="#c6c6c6"/><rect x="1.30" y="354.50" width="19.30" height="1.00" fill="#c6c6c6"/><rect x="1.30" y="369.80" width="19.30" height="1.00" fill="#c6c6c6"/><rect x="1.30" y="385.40" width="19.30" height="1.00" fill="#c6c6c6"/><rect x="1.30" y="400.90" width="19.30" height="1.00" fill="#c6c6c6"/><rect x="0.00" y="166.65" width="630.40" height="1.10" fill="#b8b8b8"/><rect x="20.05" y="153.50" width="1.10" height="257.10" fill="#b8b8b8"/><rect x="40.00" y="184.20" width="52.40" height="13.60" fill="#4f81bd"/><rect x="80.70" y="185.30" width="11.40" height="12.00" fill="#fdfdfd" stroke="#b9b9b9" stroke-width="0.9"/><path d="M84.00 190.50h4.4l-2.2 2.4z" fill="#505050"/><rect x="95.00" y="184.20" width="67.10" height="13.60" fill="#4f81bd"/><rect x="150.40" y="185.30" width="11.40" height="12.00" fill="#fdfdfd" stroke="#b9b9b9" stroke-width="0.9"/><path d="M153.70 190.50h4.4l-2.2 2.4z" fill="#505050"/><rect x="164.70" y="184.20" width="72.80" height="13.60" fill="#4f81bd"/><rect x="225.80" y="185.30" width="11.40" height="12.00" fill="#fdfdfd" stroke="#b9b9b9" stroke-width="0.9"/><path d="M229.10 190.50h4.4l-2.2 2.4z" fill="#505050"/><rect x="240.10" y="184.20" width="70.90" height="13.60" fill="#4f81bd"/><rect x="299.30" y="185.30" width="11.40" height="12.00" fill="#fdfdfd" stroke="#b9b9b9" stroke-width="0.9"/><path d="M302.60 190.50h4.4l-2.2 2.4z" fill="#505050"/><rect x="313.60" y="184.20" width="66.60" height="13.60" fill="#4f81bd"/><rect x="368.50" y="185.30" width="11.40" height="12.00" fill="#fdfdfd" stroke="#b9b9b9" stroke-width="0.9"/><path d="M371.80 190.50h4.4l-2.2 2.4z" fill="#505050"/><rect x="38.80" y="199.80" width="54.50" height="15.50" fill="#dce6f1"/><rect x="38.80" y="232.00" width="54.50" height="15.00" fill="#dce6f1"/><rect x="38.80" y="262.90" width="54.50" height="14.30" fill="#dce6f1"/><rect x="38.80" y="294.00" width="54.50" height="14.60" fill="#dce6f1"/><rect x="38.80" y="324.80" width="54.50" height="15.00" fill="#dce6f1"/><rect x="38.80" y="355.70" width="54.50" height="14.60" fill="#dce6f1"/><defs><filter id="cb" x="-5%" y="-5%" width="110%" height="110%"><feGaussianBlur stdDeviation="2.2 0.7"/></filter><clipPath id="cc"><rect x="93.60" y="199.60" width="287.70" height="186.50"/></clipPath></defs><g clip-path="url(#cc)"><g filter="url(#cb)"><rect x="85.30" y="191.10" width="78.00" height="24.50" fill="#fa9473"/><rect x="163.00" y="191.10" width="75.70" height="24.50" fill="#fdbd7b"/><rect x="238.40" y="191.10" width="73.80" height="24.50" fill="#f8696b"/><rect x="311.90" y="191.10" width="77.20" height="24.50" fill="#fa8671"/><rect x="85.30" y="215.30" width="78.00" height="16.30" fill="#fcb67a"/><rect x="163.00" y="215.30" width="75.70" height="16.30" fill="#fcaf78"/><rect x="238.40" y="215.30" width="73.80" height="16.30" fill="#f97c6f"/><rect x="311.90" y="215.30" width="77.20" height="16.30" fill="#fa9573"/><rect x="85.30" y="231.30" width="78.00" height="16.00" fill="#ffe583"/><rect x="163.00" y="231.30" width="75.70" height="16.00" fill="#fcab78"/><rect x="238.40" y="231.30" width="73.80" height="16.00" fill="#fb9874"/><rect x="311.90" y="231.30" width="77.20" height="16.00" fill="#fa9273"/><rect x="85.30" y="247.00" width="78.00" height="15.50" fill="#feeb84"/><rect x="163.00" y="247.00" width="75.70" height="15.50" fill="#fed07f"/><rect x="238.40" y="247.00" width="73.80" height="15.50" fill="#fb9c75"/><rect x="311.90" y="247.00" width="77.20" height="15.50" fill="#fba977"/><rect x="85.30" y="262.20" width="78.00" height="15.30" fill="#fedb81"/><rect x="163.00" y="262.20" width="75.70" height="15.30" fill="#fdc27c"/><rect x="238.40" y="262.20" width="73.80" height="15.30" fill="#fcb77a"/><rect x="311.90" y="262.20" width="77.20" height="15.30" fill="#fed981"/><rect x="85.30" y="277.20" width="78.00" height="16.40" fill="#ffe883"/><rect x="163.00" y="277.20" width="75.70" height="16.40" fill="#fdbd7b"/><rect x="238.40" y="277.20" width="73.80" height="16.40" fill="#fdbe7b"/><rect x="311.90" y="277.20" width="77.20" height="16.40" fill="#f7e984"/><rect x="85.30" y="293.30" width="78.00" height="15.60" fill="#ebe583"/><rect x="163.00" y="293.30" width="75.70" height="15.60" fill="#fae984"/><rect x="238.40" y="293.30" width="73.80" height="15.60" fill="#fed780"/><rect x="311.90" y="293.30" width="77.20" height="15.60" fill="#fdea84"/><rect x="85.30" y="308.60" width="78.00" height="15.80" fill="#eae583"/><rect x="163.00" y="308.60" width="75.70" height="15.80" fill="#d4df82"/><rect x="238.40" y="308.60" width="73.80" height="15.80" fill="#ffe583"/><rect x="311.90" y="308.60" width="77.20" height="15.80" fill="#fae984"/><rect x="85.30" y="324.10" width="78.00" height="16.00" fill="#f1e783"/><rect x="163.00" y="324.10" width="75.70" height="16.00" fill="#b0d47f"/><rect x="238.40" y="324.10" width="73.80" height="16.00" fill="#f2e783"/><rect x="311.90" y="324.10" width="77.20" height="16.00" fill="#ece683"/><rect x="85.30" y="339.80" width="78.00" height="15.50" fill="#e7e483"/><rect x="163.00" y="339.80" width="75.70" height="15.50" fill="#98cd7e"/><rect x="238.40" y="339.80" width="73.80" height="15.50" fill="#fbea84"/><rect x="311.90" y="339.80" width="77.20" height="15.50" fill="#c7db81"/><rect x="85.30" y="355.00" width="78.00" height="15.60" fill="#cddc81"/><rect x="163.00" y="355.00" width="75.70" height="15.60" fill="#89c97d"/><rect x="238.40" y="355.00" width="73.80" height="15.60" fill="#e0e282"/><rect x="311.90" y="355.00" width="77.20" height="15.60" fill="#cddd81"/><rect x="85.30" y="370.30" width="78.00" height="23.60" fill="#d6df82"/><rect x="163.00" y="370.30" width="75.70" height="23.60" fill="#63be7b"/><rect x="238.40" y="370.30" width="73.80" height="23.60" fill="#e0e282"/><rect x="311.90" y="370.30" width="77.20" height="23.60" fill="#bcd880"/></g></g><rect x="92.70" y="199.60" width="1.10" height="186.30" fill="#f4f4f4"/><path d="M38.70 199.70h3.4l-3.4 3.4z" fill="#217346"/><path d="M380.70 382.70v2.8h-2.8z" fill="#2f4b8f"/><rect x="381.10" y="165.60" width="50.30" height="1.70" fill="#217346"/><rect x="19.10" y="277.20" width="1.60" height="16.10" fill="#217346"/><rect x="381.20" y="277.30" width="50.20" height="16.00" fill="none" stroke="#1e6840" stroke-width="1.55"/><rect x="429.10" y="291.00" width="4.40" height="4.40" fill="#fff"/><rect x="429.80" y="291.70" width="3.60" height="3.60" fill="#1e6840"/><rect x="629.80" y="153.50" width="1.20" height="257.10" fill="#bcbcbc"/><path d="M17.8 156.2V164.8H8.6Z" fill="#b7b7b7"/><rect x="631.00" y="151.50" width="17.60" height="259.10" fill="#e8e8e8"/><rect x="633.30" y="166.00" width="12.00" height="234.00" fill="#dbdbdb"/><rect x="633.80" y="166.00" width="11.00" height="174.00" fill="#fff" stroke="#bdbdbd" stroke-width="1"/><rect x="633.80" y="155.80" width="11.00" height="10.00" fill="#fff" stroke="#c6c6c6" stroke-width="1"/><path d="M636.8 161.6L639.3 158.8L641.8 161.6Z" fill="#666"/><rect x="633.80" y="400.00" width="11.00" height="10.20" fill="#fff" stroke="#c6c6c6" stroke-width="1"/><path d="M636.8 404H641.8L639.3 406.8Z" fill="#555"/></svg>
<span class="t" style="left:52px;top:185px;font-size:10.40px;line-height:14px;color:#fff;font-weight:700;-webkit-text-stroke:0.15px #fff;transform:matrix(0.9600,0.0005,0,1.0000,0.954,0.500);">Sales</span>
<span class="t" style="left:108px;top:185px;font-size:10.40px;line-height:14px;color:#fff;font-weight:700;-webkit-text-stroke:0.15px #fff;transform:matrix(0.9600,0.0005,0,1.0000,0.930,0.500);">Cookies</span>
<span class="t" style="left:178px;top:185px;font-size:10.40px;line-height:14px;color:#fff;font-weight:700;-webkit-text-stroke:0.15px #fff;transform:matrix(0.9600,0.0005,0,1.0000,0.431,0.500);">Brownies</span>
<span class="t" style="left:253px;top:185px;font-size:10.40px;line-height:14px;color:#fff;font-weight:700;-webkit-text-stroke:0.15px #fff;transform:matrix(0.9600,0.0005,0,1.0000,0.166,0.500);">Lollipops</span>
<span class="t" style="left:331px;top:185px;font-size:10.40px;line-height:14px;color:#fff;font-weight:700;-webkit-text-stroke:0.15px #fff;transform:matrix(0.9600,0.0005,0,1.0000,0.989,0.500);">Cakes</span>
<span class="t" style="left:50px;top:202px;font-size:10.40px;line-height:14px;color:#000;-webkit-text-stroke:0.3px #000;transform:matrix(0.9500,0.0005,0,1.0000,0.995,0.000);">Jan-19</span>
<span class="t" style="left:99px;top:202px;font-size:10.40px;line-height:14px;color:#000;-webkit-text-stroke:0.3px #000;transform:matrix(0.9550,0.0005,0,1.0000,0.033,0.000);">$35,683,945</span>
<span class="t" style="left:171px;top:202px;font-size:10.40px;line-height:14px;color:#000;-webkit-text-stroke:0.3px #000;transform:matrix(0.9550,0.0005,0,1.0000,0.583,0.000);">$50,384,759</span>
<span class="t" style="left:246px;top:202px;font-size:10.40px;line-height:14px;color:#000;-webkit-text-stroke:0.3px #000;transform:matrix(0.9550,0.0005,0,1.0000,0.033,0.000);">$20,394,855</span>
<span class="t" style="left:317px;top:202px;font-size:10.40px;line-height:14px;color:#000;-webkit-text-stroke:0.3px #000;transform:matrix(0.9550,0.0005,0,1.0000,0.383,0.000);">$30,848,374</span>
<span class="t" style="left:50px;top:218px;font-size:10.40px;line-height:14px;color:#000;-webkit-text-stroke:0.3px #000;transform:matrix(0.9500,0.0005,0,1.0000,0.447,0.100);">Feb-19</span>
<span class="t" style="left:99px;top:218px;font-size:10.40px;line-height:14px;color:#000;-webkit-text-stroke:0.3px #000;transform:matrix(0.9550,0.0005,0,1.0000,0.033,0.100);">$47,816,486</span>
<span class="t" style="left:171px;top:218px;font-size:10.40px;line-height:14px;color:#000;-webkit-text-stroke:0.3px #000;transform:matrix(0.9550,0.0005,0,1.0000,0.583,0.100);">$45,346,283</span>
<span class="t" style="left:246px;top:218px;font-size:10.40px;line-height:14px;color:#000;-webkit-text-stroke:0.3px #000;transform:matrix(0.9550,0.0005,0,1.0000,0.033,0.100);">$27,125,157</span>
<span class="t" style="left:317px;top:218px;font-size:10.40px;line-height:14px;color:#000;-webkit-text-stroke:0.3px #000;transform:matrix(0.9550,0.0005,0,1.0000,0.383,0.100);">$36,092,598</span>
<span class="t" style="left:50px;top:233px;font-size:10.40px;line-height:14px;color:#000;-webkit-text-stroke:0.3px #000;transform:matrix(0.9500,0.0005,0,1.0000,0.452,0.950);">Mar-19</span>
<span class="t" style="left:99px;top:233px;font-size:10.40px;line-height:14px;color:#000;-webkit-text-stroke:0.3px #000;transform:matrix(0.9550,0.0005,0,1.0000,0.033,0.950);">$64,552,257</span>
<span class="t" style="left:171px;top:233px;font-size:10.40px;line-height:14px;color:#000;-webkit-text-stroke:0.3px #000;transform:matrix(0.9550,0.0005,0,1.0000,0.583,0.950);">$43,985,895</span>
<span class="t" style="left:246px;top:233px;font-size:10.40px;line-height:14px;color:#000;-webkit-text-stroke:0.3px #000;transform:matrix(0.9550,0.0005,0,1.0000,0.033,0.950);">$37,161,465</span>
<span class="t" style="left:317px;top:233px;font-size:10.40px;line-height:14px;color:#000;-webkit-text-stroke:0.3px #000;transform:matrix(0.9550,0.0005,0,1.0000,0.383,0.950);">$35,009,820</span>
<span class="t" style="left:51px;top:249px;font-size:10.40px;line-height:14px;color:#000;-webkit-text-stroke:0.3px #000;transform:matrix(0.9500,0.0005,0,1.0000,0.272,0.400);">Apr-19</span>
<span class="t" style="left:99px;top:249px;font-size:10.40px;line-height:14px;color:#000;-webkit-text-stroke:0.3px #000;transform:matrix(0.9550,0.0005,0,1.0000,0.033,0.400);">$67,779,869</span>
<span class="t" style="left:171px;top:249px;font-size:10.40px;line-height:14px;color:#000;-webkit-text-stroke:0.3px #000;transform:matrix(0.9550,0.0005,0,1.0000,0.583,0.400);">$57,181,663</span>
<span class="t" style="left:246px;top:249px;font-size:10.40px;line-height:14px;color:#000;-webkit-text-stroke:0.3px #000;transform:matrix(0.9550,0.0005,0,1.0000,0.033,0.400);">$38,647,924</span>
<span class="t" style="left:317px;top:249px;font-size:10.40px;line-height:14px;color:#000;-webkit-text-stroke:0.3px #000;transform:matrix(0.9550,0.0005,0,1.0000,0.383,0.400);">$43,412,176</span>
<span class="t" style="left:49px;top:264px;font-size:10.40px;line-height:14px;color:#000;-webkit-text-stroke:0.3px #000;transform:matrix(0.9500,0.0005,0,1.0000,0.627,0.500);">May-19</span>
<span class="t" style="left:99px;top:264px;font-size:10.40px;line-height:14px;color:#000;-webkit-text-stroke:0.3px #000;transform:matrix(0.9550,0.0005,0,1.0000,0.033,0.500);">$61,001,882</span>
<span class="t" style="left:171px;top:264px;font-size:10.40px;line-height:14px;color:#000;-webkit-text-stroke:0.3px #000;transform:matrix(0.9550,0.0005,0,1.0000,0.583,0.500);">$52,035,313</span>
<span class="t" style="left:246px;top:264px;font-size:10.40px;line-height:14px;color:#000;-webkit-text-stroke:0.3px #000;transform:matrix(0.9550,0.0005,0,1.0000,0.033,0.500);">$48,309,905</span>
<span class="t" style="left:317px;top:264px;font-size:10.40px;line-height:14px;color:#000;-webkit-text-stroke:0.3px #000;transform:matrix(0.9550,0.0005,0,1.0000,0.383,0.500);">$60,342,925</span>
<span class="t" style="left:50px;top:280px;font-size:10.40px;line-height:14px;color:#000;-webkit-text-stroke:0.3px #000;transform:matrix(0.9500,0.0005,0,1.0000,0.995,0.050);">Jun-19</span>
<span class="t" style="left:99px;top:280px;font-size:10.40px;line-height:14px;color:#000;-webkit-text-stroke:0.3px #000;transform:matrix(0.9550,0.0005,0,1.0000,0.033,0.050);">$65,882,033</span>
<span class="t" style="left:171px;top:280px;font-size:10.40px;line-height:14px;color:#000;-webkit-text-stroke:0.3px #000;transform:matrix(0.9550,0.0005,0,1.0000,0.583,0.050);">$50,474,254</span>
<span class="t" style="left:246px;top:280px;font-size:10.40px;line-height:14px;color:#000;-webkit-text-stroke:0.3px #000;transform:matrix(0.9550,0.0005,0,1.0000,0.033,0.050);">$50,725,400</span>
<span class="t" style="left:317px;top:280px;font-size:10.40px;line-height:14px;color:#000;-webkit-text-stroke:0.3px #000;transform:matrix(0.9550,0.0005,0,1.0000,0.383,0.050);">$73,014,939</span>
<span class="t" style="left:52px;top:295px;font-size:10.40px;line-height:14px;color:#000;-webkit-text-stroke:0.3px #000;transform:matrix(0.9500,0.0005,0,1.0000,0.645,0.750);">Jul-19</span>
<span class="t" style="left:99px;top:295px;font-size:10.40px;line-height:14px;color:#000;-webkit-text-stroke:0.3px #000;transform:matrix(0.9550,0.0005,0,1.0000,0.033,0.750);">$81,693,721</span>
<span class="t" style="left:171px;top:295px;font-size:10.40px;line-height:14px;color:#000;-webkit-text-stroke:0.3px #000;transform:matrix(0.9550,0.0005,0,1.0000,0.583,0.750);">$70,663,955</span>
<span class="t" style="left:246px;top:295px;font-size:10.40px;line-height:14px;color:#000;-webkit-text-stroke:0.3px #000;transform:matrix(0.9550,0.0005,0,1.0000,0.033,0.750);">$59,855,972</span>
<span class="t" style="left:317px;top:295px;font-size:10.40px;line-height:14px;color:#000;-webkit-text-stroke:0.3px #000;transform:matrix(0.9550,0.0005,0,1.0000,0.383,0.750);">$68,634,043</span>
<span class="t" style="left:50px;top:311px;font-size:10.40px;line-height:14px;color:#000;-webkit-text-stroke:0.3px #000;transform:matrix(0.9500,0.0005,0,1.0000,0.170,0.150);">Aug-19</span>
<span class="t" style="left:99px;top:311px;font-size:10.40px;line-height:14px;color:#000;-webkit-text-stroke:0.3px #000;transform:matrix(0.9550,0.0005,0,1.0000,0.033,0.150);">$82,510,658</span>
<span class="t" style="left:171px;top:311px;font-size:10.40px;line-height:14px;color:#000;-webkit-text-stroke:0.3px #000;transform:matrix(0.9550,0.0005,0,1.0000,0.583,0.150);">$98,222,898</span>
<span class="t" style="left:246px;top:311px;font-size:10.40px;line-height:14px;color:#000;-webkit-text-stroke:0.3px #000;transform:matrix(0.9550,0.0005,0,1.0000,0.033,0.150);">$64,644,450</span>
<span class="t" style="left:317px;top:311px;font-size:10.40px;line-height:14px;color:#000;-webkit-text-stroke:0.3px #000;transform:matrix(0.9550,0.0005,0,1.0000,0.383,0.150);">$70,693,064</span>
<span class="t" style="left:50px;top:326px;font-size:10.40px;line-height:14px;color:#000;-webkit-text-stroke:0.3px #000;transform:matrix(0.9500,0.0005,0,1.0000,0.170,0.750);">Sep-19</span>
<span class="t" style="left:99px;top:326px;font-size:10.40px;line-height:14px;color:#000;-webkit-text-stroke:0.3px #000;transform:matrix(0.9550,0.0005,0,1.0000,0.033,0.750);">$76,734,912</span>
<span class="t" style="left:168px;top:326px;font-size:10.40px;line-height:14px;color:#000;-webkit-text-stroke:0.3px #000;transform:matrix(0.9550,0.0005,0,1.0000,0.821,0.750);">$124,743,081</span>
<span class="t" style="left:246px;top:326px;font-size:10.40px;line-height:14px;color:#000;-webkit-text-stroke:0.3px #000;transform:matrix(0.9550,0.0005,0,1.0000,0.033,0.750);">$76,280,451</span>
<span class="t" style="left:317px;top:326px;font-size:10.40px;line-height:14px;color:#000;-webkit-text-stroke:0.3px #000;transform:matrix(0.9550,0.0005,0,1.0000,0.383,0.750);">$80,590,093</span>
<span class="t" style="left:51px;top:342px;font-size:10.40px;line-height:14px;color:#000;-webkit-text-stroke:0.3px #000;transform:matrix(0.9500,0.0005,0,1.0000,0.275,0.200);">Oct-19</span>
<span class="t" style="left:99px;top:342px;font-size:10.40px;line-height:14px;color:#000;-webkit-text-stroke:0.3px #000;transform:matrix(0.9550,0.0005,0,1.0000,0.033,0.200);">$84,408,403</span>
<span class="t" style="left:169px;top:342px;font-size:10.40px;line-height:14px;color:#000;-webkit-text-stroke:0.3px #000;transform:matrix(0.9550,0.0005,0,1.0000,0.190,0.200);">$142,207,112</span>
<span class="t" style="left:246px;top:342px;font-size:10.40px;line-height:14px;color:#000;-webkit-text-stroke:0.3px #000;transform:matrix(0.9550,0.0005,0,1.0000,0.033,0.200);">$69,415,210</span>
<span class="t" style="left:314px;top:342px;font-size:10.40px;line-height:14px;color:#000;-webkit-text-stroke:0.3px #000;transform:matrix(0.9550,0.0005,0,1.0000,0.621,0.200);">$107,990,725</span>
<span class="t" style="left:50px;top:357px;font-size:10.40px;line-height:14px;color:#000;-webkit-text-stroke:0.3px #000;transform:matrix(0.9500,0.0005,0,1.0000,0.175,0.450);">Nov-19</span>
<span class="t" style="left:96px;top:357px;font-size:10.40px;line-height:14px;color:#000;-webkit-text-stroke:0.3px #000;transform:matrix(0.9550,0.0005,0,1.0000,0.271,0.450);">$103,822,336</span>
<span class="t" style="left:168px;top:357px;font-size:10.40px;line-height:14px;color:#000;-webkit-text-stroke:0.3px #000;transform:matrix(0.9550,0.0005,0,1.0000,0.821,0.450);">$153,583,681</span>
<span class="t" style="left:246px;top:357px;font-size:10.40px;line-height:14px;color:#000;-webkit-text-stroke:0.3px #000;transform:matrix(0.9550,0.0005,0,1.0000,0.033,0.450);">$89,545,621</span>
<span class="t" style="left:314px;top:357px;font-size:10.40px;line-height:14px;color:#000;-webkit-text-stroke:0.3px #000;transform:matrix(0.9550,0.0005,0,1.0000,0.621,0.450);">$103,671,096</span>
<span class="t" style="left:50px;top:372px;font-size:10.40px;line-height:14px;color:#000;-webkit-text-stroke:0.3px #000;transform:matrix(0.9500,0.0005,0,1.0000,0.175,0.900);">Dec-19</span>
<span class="t" style="left:99px;top:372px;font-size:10.40px;line-height:14px;color:#000;-webkit-text-stroke:0.3px #000;transform:matrix(0.9550,0.0005,0,1.0000,0.033,0.900);">$96,554,772</span>
<span class="t" style="left:168px;top:372px;font-size:10.40px;line-height:14px;color:#000;-webkit-text-stroke:0.3px #000;transform:matrix(0.9550,0.0005,0,1.0000,0.821,0.900);">$181,228,743</span>
<span class="t" style="left:246px;top:372px;font-size:10.40px;line-height:14px;color:#000;-webkit-text-stroke:0.3px #000;transform:matrix(0.9550,0.0005,0,1.0000,0.033,0.900);">$89,545,621</span>
<span class="t" style="left:315px;top:372px;font-size:10.40px;line-height:14px;color:#000;-webkit-text-stroke:0.3px #000;transform:matrix(0.9550,0.0005,0,1.0000,0.727,0.900);">$116,111,628</span>
<span class="t" style="left:26px;top:153px;font-size:9.80px;line-height:13px;color:#2b2b2b;-webkit-text-stroke:0.3px #2b2b2b;transform:matrix(0.9300,0.0005,0,1.0000,0.410,0.400);">A</span>
<span class="t" style="left:62px;top:153px;font-size:9.80px;line-height:13px;color:#2b2b2b;-webkit-text-stroke:0.3px #2b2b2b;transform:matrix(0.9300,0.0005,0,1.0000,0.760,0.400);">B</span>
<span class="t" style="left:124px;top:153px;font-size:9.80px;line-height:13px;color:#2b2b2b;-webkit-text-stroke:0.3px #2b2b2b;transform:matrix(0.9300,0.0005,0,1.0000,0.859,0.400);">C</span>
<span class="t" style="left:197px;top:153px;font-size:9.80px;line-height:13px;color:#2b2b2b;-webkit-text-stroke:0.3px #2b2b2b;transform:matrix(0.9300,0.0005,0,1.0000,0.409,0.400);">D</span>
<span class="t" style="left:272px;top:153px;font-size:9.80px;line-height:13px;color:#2b2b2b;-webkit-text-stroke:0.3px #2b2b2b;transform:matrix(0.9300,0.0005,0,1.0000,0.110,0.400);">E</span>
<span class="t" style="left:343px;top:153px;font-size:9.80px;line-height:13px;color:#2b2b2b;-webkit-text-stroke:0.3px #2b2b2b;transform:matrix(0.9300,0.0005,0,1.0000,0.716,0.400);">F</span>
<span class="t" style="left:402px;top:153px;font-size:9.80px;line-height:13px;color:#3d5f4b;-webkit-text-stroke:0.3px #3d5f4b;transform:matrix(0.9300,0.0005,0,1.0000,0.706,0.400);">G</span>
<span class="t" style="left:452px;top:153px;font-size:9.80px;line-height:13px;color:#2b2b2b;-webkit-text-stroke:0.3px #2b2b2b;transform:matrix(0.9300,0.0005,0,1.0000,0.859,0.400);">H</span>
<span class="t" style="left:504px;top:153px;font-size:9.80px;line-height:13px;color:#2b2b2b;-webkit-text-stroke:0.3px #2b2b2b;transform:matrix(0.9300,0.0005,0,1.0000,0.334,0.400);">I</span>
<span class="t" style="left:552px;top:153px;font-size:9.80px;line-height:13px;color:#2b2b2b;-webkit-text-stroke:0.3px #2b2b2b;transform:matrix(0.9300,0.0005,0,1.0000,0.971,0.400);">J</span>
<span class="t" style="left:602px;top:153px;font-size:9.80px;line-height:13px;color:#2b2b2b;-webkit-text-stroke:0.3px #2b2b2b;transform:matrix(0.9300,0.0005,0,1.0000,0.260,0.400);">K</span>
<span class="t" style="left:8px;top:169px;font-size:9.80px;line-height:13px;color:#2b2b2b;-webkit-text-stroke:0.3px #2b2b2b;transform:matrix(0.9300,0.0005,0,1.0000,0.066,0.550);">1</span>
<span class="t" style="left:8px;top:185px;font-size:9.80px;line-height:13px;color:#2b2b2b;-webkit-text-stroke:0.3px #2b2b2b;transform:matrix(0.9300,0.0005,0,1.0000,0.066,0.450);">2</span>
<span class="t" style="left:8px;top:201px;font-size:9.80px;line-height:13px;color:#2b2b2b;-webkit-text-stroke:0.3px #2b2b2b;transform:matrix(0.9300,0.0005,0,1.0000,0.066,0.450);">3</span>
<span class="t" style="left:8px;top:217px;font-size:9.80px;line-height:13px;color:#2b2b2b;-webkit-text-stroke:0.3px #2b2b2b;transform:matrix(0.9300,0.0005,0,1.0000,0.066,0.650);">4</span>
<span class="t" style="left:8px;top:233px;font-size:9.80px;line-height:13px;color:#2b2b2b;-webkit-text-stroke:0.3px #2b2b2b;transform:matrix(0.9300,0.0005,0,1.0000,0.066,0.650);">5</span>
<span class="t" style="left:8px;top:249px;font-size:9.80px;line-height:13px;color:#2b2b2b;-webkit-text-stroke:0.3px #2b2b2b;transform:matrix(0.9300,0.0005,0,1.0000,0.066,0.350);">6</span>
<span class="t" style="left:8px;top:264px;font-size:9.80px;line-height:13px;color:#2b2b2b;-webkit-text-stroke:0.3px #2b2b2b;transform:matrix(0.9300,0.0005,0,1.0000,0.066,0.550);">7</span>
<span class="t" style="left:8px;top:279px;font-size:9.80px;line-height:13px;color:#3d6b50;-webkit-text-stroke:0.3px #3d6b50;transform:matrix(0.9300,0.0005,0,1.0000,0.066,0.550);">8</span>
<span class="t" style="left:8px;top:295px;font-size:9.80px;line-height:13px;color:#2b2b2b;-webkit-text-stroke:0.3px #2b2b2b;transform:matrix(0.9300,0.0005,0,1.0000,0.066,0.650);">9</span>
<span class="t" style="left:5px;top:310px;font-size:9.80px;line-height:13px;color:#2b2b2b;-webkit-text-stroke:0.3px #2b2b2b;transform:matrix(0.9300,0.0005,0,1.0000,0.531,0.950);">10</span>
<span class="t" style="left:5px;top:326px;font-size:9.80px;line-height:13px;color:#2b2b2b;-webkit-text-stroke:0.3px #2b2b2b;transform:matrix(0.9300,0.0005,0,1.0000,0.869,0.450);">11</span>
<span class="t" style="left:5px;top:342px;font-size:9.80px;line-height:13px;color:#2b2b2b;-webkit-text-stroke:0.3px #2b2b2b;transform:matrix(0.9300,0.0005,0,1.0000,0.531,0.150);">12</span>
<span class="t" style="left:5px;top:357px;font-size:9.80px;line-height:13px;color:#2b2b2b;-webkit-text-stroke:0.3px #2b2b2b;transform:matrix(0.9300,0.0005,0,1.0000,0.531,0.350);">13</span>
<span class="t" style="left:5px;top:372px;font-size:9.80px;line-height:13px;color:#2b2b2b;-webkit-text-stroke:0.3px #2b2b2b;transform:matrix(0.9300,0.0005,0,1.0000,0.531,0.650);">14</span>
<span class="t" style="left:5px;top:388px;font-size:9.80px;line-height:13px;color:#2b2b2b;-webkit-text-stroke:0.3px #2b2b2b;transform:matrix(0.9300,0.0005,0,1.0000,0.531,0.250);">15</span>
<span class="t" style="left:5px;top:403px;font-size:9.80px;line-height:13px;color:#2b2b2b;-webkit-text-stroke:0.3px #2b2b2b;transform:matrix(0.9300,0.0005,0,1.0000,0.531,0.750);">16</span>
<div style="left:0px;top:410px;width:648px;height:22px;background:#e6e6e6;transform-origin:0 0;transform:matrix(1.0000,0,0,1.0000,0.000,0.600);"></div>
<div style="left:0px;top:410px;width:648px;height:1px;background:#b4b4b4;transform-origin:0 0;transform:matrix(1.0000,0,0,1.2000,0.000,0.100);"></div>
<svg style="left:21px;top:418px" width="6" height="8"><g transform="translate(0.50 0.30)"><path d="M3.4 0V5.4L0 2.7Z" fill="#c0c0c0"/></g></svg>
<svg style="left:44px;top:418px" width="6" height="8"><g transform="translate(0.00 0.30)"><path d="M0 0V5.4L3.4 2.7Z" fill="#c0c0c0"/></g></svg>
<div style="left:78px;top:413px;width:1px;height:15px;background:#a8a8a8;transform-origin:0 0;transform:matrix(1.0000,0,0,1.0267,0.000,0.300);"></div>
<span class="t" style="left:90px;top:413px;font-size:10.50px;line-height:14px;color:#444;-webkit-text-stroke:0.22px #444;transform:matrix(1.0103,0.0005,0,1.0000,0.000,0.700);">no-formatting</span>
<div style="left:165px;top:409px;width:70px;height:20px;background:#fff;border-left:1px solid #b4b4b4;border-right:1px solid #b4b4b4;border-bottom:2px solid #217346;transform-origin:0 0;transform:matrix(1.0043,0,0,1.0200,0.000,0.400);"></div>
<span class="t" style="left:175px;top:413px;font-size:10.50px;line-height:14px;color:#1d6a40;font-weight:700;-webkit-text-stroke:0.22px #1d6a40;transform:matrix(0.9863,0.0005,0,1.0000,0.000,0.700);">formatting</span>
<svg style="left:261px;top:414px" width="15" height="15"><g transform="translate(0.00 0.80)"><circle cx="6.5" cy="6.5" r="5.8" fill="none" stroke="#666" stroke-width="1"/><path d="M6.5 3.6V9.4M3.6 6.5H9.4" stroke="#666" stroke-width="1.1"/></g></svg>
<div style="left:388px;top:418px;width:1px;height:1px;background:#9a9a9a;transform-origin:0 0;transform:matrix(1.0000,0,0,1.2000,0.700,0.400);"></div>
<div style="left:388px;top:421px;width:1px;height:1px;background:#9a9a9a;transform-origin:0 0;transform:matrix(1.0000,0,0,1.2000,0.700,0.200);"></div>
<div style="left:388px;top:424px;width:1px;height:1px;background:#9a9a9a;transform-origin:0 0;transform:matrix(1.0000,0,0,1.2000,0.700,0.000);"></div>
<div style="left:401px;top:416px;width:229px;height:11px;background:#dbdbdb;transform-origin:0 0;transform:matrix(1.0009,0,0,1.0273,0.300,0.300);"></div>
<div style="left:401px;top:416px;width:11px;height:11px;background:#fff;border:1px solid #c0c0c0;transform-origin:0 0;transform:matrix(1.0273,0,0,1.0273,0.300,0.300);"></div>
<svg style="left:405px;top:419px" width="5" height="7"><g transform="translate(0.60 0.40)"><path d="M2.8 0V5L0 2.5Z" fill="#555"/></g></svg>
<div style="left:413px;top:416px;width:185px;height:11px;background:#fff;border:1px solid #c0c0c0;transform-origin:0 0;transform:matrix(1.0000,0,0,1.0273,0.800,0.300);"></div>
<div style="left:619px;top:416px;width:11px;height:11px;background:#fff;border:1px solid #c0c0c0;transform-origin:0 0;transform:matrix(1.0273,0,0,1.0273,0.200,0.300);"></div>
<svg style="left:623px;top:419px" width="5" height="7"><g transform="translate(0.60 0.40)"><path d="M0 0V5L2.8 2.5Z" fill="#555"/></g></svg>
<div style="left:0px;top:432px;width:648px;height:18px;background:#f1f1f1;transform-origin:0 0;transform:matrix(1.0000,0,0,0.9722,0.000,0.500);"></div>
<div style="left:0px;top:432px;width:648px;height:1px;background:#d0d0d0;transform-origin:0 0;transform:matrix(1.0000,0,0,0.9000,0.000,0.000);"></div>
<span class="t" style="left:6px;top:434px;font-size:9.80px;line-height:13px;color:#444;-webkit-text-stroke:0.22px #444;transform:matrix(0.8225,0.0005,0,1.0000,0.700,0.200);">Ready</span>
<div style="left:413px;top:432px;width:28px;height:16px;background:#c8c8c8;transform-origin:0 0;transform:matrix(1.0143,0,0,1.0000,0.300,0.800);"></div>
<svg style="left:421px;top:435px" width="13" height="12"><g transform="translate(0.70 0.30)"><rect x="0.5" y="0.5" width="9.4" height="8.8" fill="#fff" stroke="#555" stroke-width="1"/><path d="M3.6 0.5V9.3M6.8 0.5V9.3M0.5 3.4H9.9M0.5 6.4H9.9" stroke="#555" stroke-width="0.9"/></g></svg>
<svg style="left:451px;top:435px" width="13" height="12"><g transform="translate(0.30 0.30)"><rect x="0.5" y="0.5" width="9.8" height="8.8" fill="none" stroke="#666" stroke-width="1"/><rect x="3" y="2.4" width="4.8" height="5" fill="none" stroke="#777" stroke-width="0.9"/></g></svg>
<svg style="left:480px;top:435px" width="14" height="12"><g transform="translate(0.50 0.30)"><rect x="0.5" y="0.5" width="10.2" height="8.8" fill="none" stroke="#666" stroke-width="1"/><path d="M3.4 0.5V5.2H7.6V0.5" fill="none" stroke="#666" stroke-width="0.9"/></g></svg>
<div style="left:504px;top:440px;width:5px;height:1px;background:#444;transform-origin:0 0;transform:matrix(1.0000,0,0,1.3000,0.200,0.000);"></div>
<div style="left:513px;top:440px;width:76px;height:1px;background:#a6a6a6;transform-origin:0 0;transform:matrix(1.0000,0,0,0.9000,0.300,0.200);"></div>
<div style="left:550px;top:436px;width:3px;height:8px;background:#555;transform-origin:0 0;transform:matrix(0.9333,0,0,1.0000,0.000,0.300);"></div>
<svg style="left:593px;top:437px" width="9" height="9"><g transform="translate(0.00 0.40)"><path d="M3.2 0V6.4M0 3.2H6.4" stroke="#444" stroke-width="1.3"/></g></svg>
<span class="t" style="left:611px;top:434px;font-size:9.80px;line-height:13px;color:#444;-webkit-text-stroke:0.22px #444;transform:matrix(0.8139,0.0005,0,1.0000,0.300,0.200);">100%</span>
<div style="left:0px;top:45px;width:1px;height:405px;background:#217346;transform-origin:0 0;transform:matrix(1.2000,0,0,0.9995,0.000,0.200);"></div>
<div style="left:1px;top:46px;width:1px;height:403px;background:#f6f6f6;transform-origin:0 0;transform:matrix(0.9000,0,0,0.9990,0.200,0.000);"></div>
<div style="left:647px;top:45px;width:1px;height:405px;background:#2c7a52;transform-origin:0 0;transform:matrix(1.0000,0,0,0.9995,0.000,0.200);"></div>
<div style="left:0px;top:448px;width:648px;height:1px;background:#217346;transform-origin:0 0;transform:matrix(1.0000,0,0,1.3000,0.000,0.700);"></div>
</div></body></html>
